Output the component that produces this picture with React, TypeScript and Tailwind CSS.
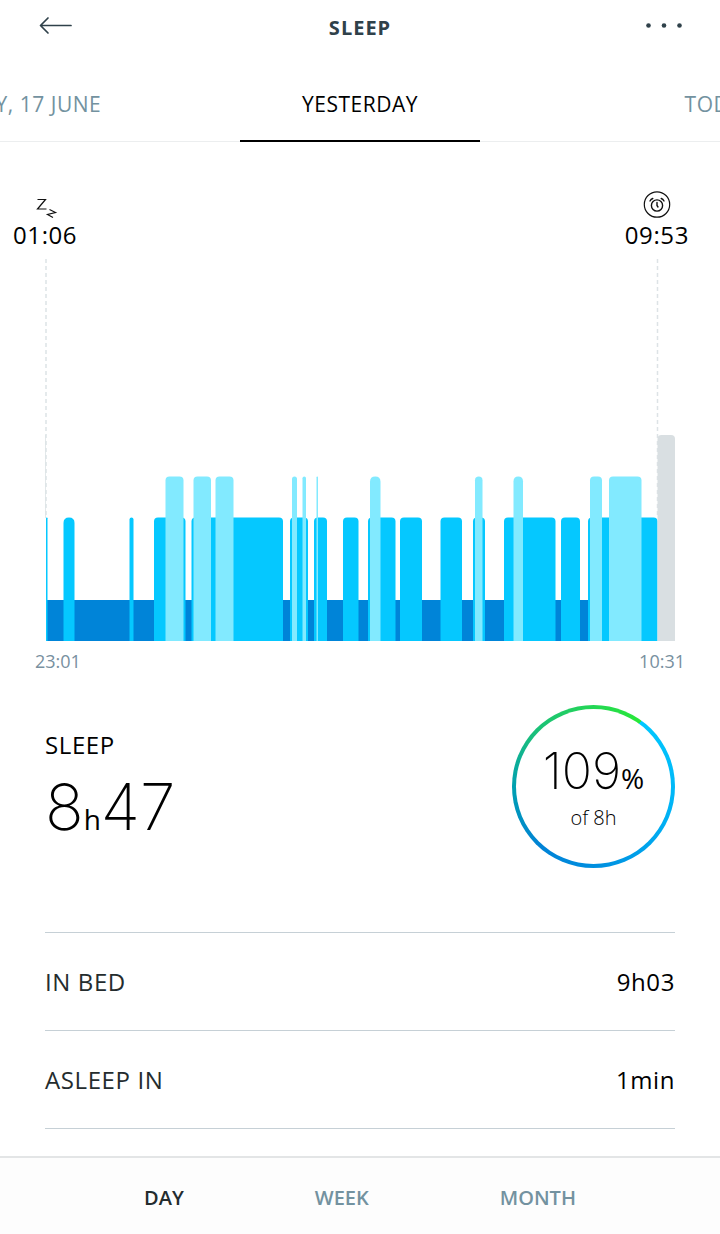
import { useState } from 'react'

type Stage = 'deep' | 'light' | 'awake' | 'up'
type Segment = { from: number; to: number; stage: Stage }

const CHART_W = 630
const CHART_H = 382

const STAGES: Record<Stage, { top: number; color: string }> = {
  deep: { top: 341, color: '#0084d8' },
  light: { top: 258.5, color: '#05c8ff' },
  awake: { top: 217.5, color: '#82eaff' },
  up: { top: 176, color: '#d9dfe2' },
}

// Drawn in order, so the taller stages sit on top of the deep sleep band
const SEGMENTS: Segment[] = [
  { from: 1, to: 544, stage: 'deep' },
  { from: 1, to: 2.5, stage: 'light' },
  { from: 18.5, to: 29.5, stage: 'light' },
  { from: 84.5, to: 88.5, stage: 'light' },
  { from: 109, to: 140.5, stage: 'light' },
  { from: 146.5, to: 238, stage: 'light' },
  { from: 245, to: 263, stage: 'light' },
  { from: 269, to: 282, stage: 'light' },
  { from: 298, to: 313.5, stage: 'light' },
  { from: 323, to: 350.5, stage: 'light' },
  { from: 355, to: 377, stage: 'light' },
  { from: 395.5, to: 417, stage: 'light' },
  { from: 428, to: 440, stage: 'light' },
  { from: 459, to: 510.5, stage: 'light' },
  { from: 516, to: 535, stage: 'light' },
  { from: 543, to: 612.5, stage: 'light' },
  { from: 120.5, to: 138.5, stage: 'awake' },
  { from: 148.5, to: 166, stage: 'awake' },
  { from: 170.5, to: 188.5, stage: 'awake' },
  { from: 247, to: 252, stage: 'awake' },
  { from: 257.5, to: 261, stage: 'awake' },
  { from: 271.5, to: 273, stage: 'awake' },
  { from: 325, to: 335.5, stage: 'awake' },
  { from: 430, to: 437.5, stage: 'awake' },
  { from: 468.5, to: 478, stage: 'awake' },
  { from: 545, to: 557, stage: 'awake' },
  { from: 564, to: 596.5, stage: 'awake' },
  { from: 612.5, to: 630, stage: 'up' },
]

const DAYS = ['SATURDAY, 17 JUNE', 'YESTERDAY', 'TODAY']
const RANGES = ['DAY', 'WEEK', 'MONTH']
const DETAILS = [
  { label: 'IN BED', value: '9h03' },
  { label: 'ASLEEP IN', value: '1min' },
]

function barPath({ from, to, stage }: Segment) {
  const top = STAGES[stage].top
  const w = to - from
  // narrow bars get a full round cap, wide ones only soft corners
  const r = stage === 'deep' ? 0 : w < 12 ? w / 2 : 4
  return `M${from} ${CHART_H}V${top + r}q0 ${-r} ${r} ${-r}H${to - r}q${r} 0 ${r} ${r}V${CHART_H}Z`
}

function SleepChart() {
  return (
    <svg viewBox={`0 0 ${CHART_W} ${CHART_H}`} className="block w-full" role="img" aria-label="Sleep stages">
      <path d="M.5 176V259" stroke="#e3e8ea" />
      <path d="M1 0V259M612.5 0V259" stroke="#dde3e6" strokeWidth="1.5" strokeDasharray="4 3" />
      {SEGMENTS.map(s => (
        <path key={`${s.stage}-${s.from}`} d={barPath(s)} fill={STAGES[s.stage].color} />
      ))}
    </svg>
  )
}

function SnoozeIcon() {
  return (
    <svg width="22" height="24" viewBox="0 0 22 24" fill="none" stroke="#111" strokeWidth="1.2">
      <path d="M1.500 4.500H9.500L1.500 14H10.500" />
      <path d="M13.500 14.500L19.500 17.500L11.500 19.500L17 22.500" />
    </svg>
  )
}

function AlarmIcon() {
  return (
    <svg width="28" height="28" viewBox="0 0 28 28" fill="none" stroke="#111" strokeWidth="1.4" strokeLinecap="round">
      <circle cx="14" cy="13.5" r="12.7" strokeWidth="1.2" />
      <circle cx="14" cy="14.5" r="5.6" />
      <path d="M14 11.500V14.500L15 16" />
      <path d="M7 10Q8 8.200 9.800 7.500M18.200 7.500Q20 8.200 21 10" />
    </svg>
  )
}

export default function App() {
  const [day, setDay] = useState('YESTERDAY')
  const [range, setRange] = useState('DAY')

  return (
    <div className="flex min-h-screen w-full flex-col overflow-x-hidden bg-white font-['Open_Sans','Noto_Sans',sans-serif] text-black">
      <header className="flex items-center justify-between px-9 pt-2 text-[#2f414a]">
        <button aria-label="Back" className="w-10">
          <svg width="40" height="32" viewBox="0 0 40 32" fill="none" stroke="currentColor" strokeWidth="1.7" strokeLinecap="round" strokeLinejoin="round">
            <path d="M35 15.500H5M12 8L4.500 15.500L12 23" />
          </svg>
        </button>
        <h1 className="pt-1 text-xl leading-8 font-bold tracking-wider">SLEEP</h1>
        <button aria-label="More" className="w-10">
          <svg width="40" height="32" viewBox="0 0 40 32" fill="currentColor">
            <circle cx="4.500" cy="15.500" r="2.300" />
            <circle cx="20" cy="15.500" r="2.300" />
            <circle cx="35.500" cy="15.500" r="2.300" />
          </svg>
        </button>
      </header>

      <nav className="mt-5 border-b border-[#eceeef]">
        <div className="-mx-[25%] flex">
          {DAYS.map(d => (
            <button key={d} onClick={() => setDay(d)} className="flex flex-1 justify-center">
              <span className={`-mb-px flex h-[78px] w-2/3 items-center justify-center border-b-2 pt-2 pb-0.5 text-[21px] tracking-wide whitespace-nowrap ${
                d === day ? 'border-black text-black' : 'border-transparent text-[#7392a0]'
              }`}>
                {d}
              </span>
            </button>
          ))}
        </div>
      </nav>

      <main className="flex-1">
        <div className="flex justify-between pt-[49px] pr-[31px] pl-[13px]">
          <div className="flex flex-col items-center">
            <span className="flex h-7 items-center pt-1 pl-1"><SnoozeIcon /></span>
            <time className="text-2xl leading-8 tracking-wide">01:06</time>
          </div>
          <div className="flex flex-col items-center">
            <AlarmIcon />
            <time className="text-2xl leading-8 tracking-wide">09:53</time>
          </div>
        </div>

        <div className="px-[45px] pt-2">
          <SleepChart />
        </div>
        <div className="flex justify-between px-[35px] pt-1 text-lg leading-8 text-[#7890a0]">
          <time>23:01</time>
          <time>10:31</time>
        </div>

        <section className="flex items-start justify-between px-[45px] pt-7">
          <div className="pt-6">
            <h2 className="text-2xl leading-8 tracking-wide">SLEEP</h2>
            <p className="flex items-baseline pt-0.5 font-['Inter',sans-serif] text-[64px] leading-[88px] font-extralight">
              8<span className="font-['Open_Sans',sans-serif] text-[28px] font-normal">h</span>47
            </p>
          </div>
          <div className="size-[163px] rounded-full bg-[conic-gradient(from_36deg,#00c8ff_0deg,#00b4f6_70deg,#0090e0_140deg,#0082d6_185deg,#00a0b0_234deg,#18bc80_270deg,#22d060_310deg,#28e838_360deg)] p-1">
            <div className="flex h-full flex-col items-center rounded-full bg-white pt-8">
              <p className="flex items-baseline font-['Inter',sans-serif] text-[50px] leading-[60px] font-extralight">
                109<span className="font-['Open_Sans',sans-serif] text-[28px] font-medium">%</span>
              </p>
              <p className="text-xl leading-5 font-light">of 8h</p>
            </div>
          </div>
        </section>

        <dl className="mx-[45px] mt-16 mb-6 border-t border-[#c6d0d6]">
          {DETAILS.map(({ label, value }) => (
            <div key={label} className="flex h-[98px] items-center justify-between border-b border-[#c6d0d6] text-2xl">
              <dt className="tracking-wide text-[#242c2e]">{label}</dt>
              <dd className="tracking-wide">{value}</dd>
            </div>
          ))}
        </dl>
      </main>

      <footer className="flex h-[78px] items-center justify-center gap-[131px] border-t-2 border-[#e3e5e6] bg-[#fdfdfd] pt-1 text-xl font-semibold">
        {RANGES.map(r => (
          <button key={r} onClick={() => setRange(r)} className={r === range ? 'text-[#242c2e]' : 'text-[#7392a0]'}>
            {r}
          </button>
        ))}
      </footer>
    </div>
  )
}
